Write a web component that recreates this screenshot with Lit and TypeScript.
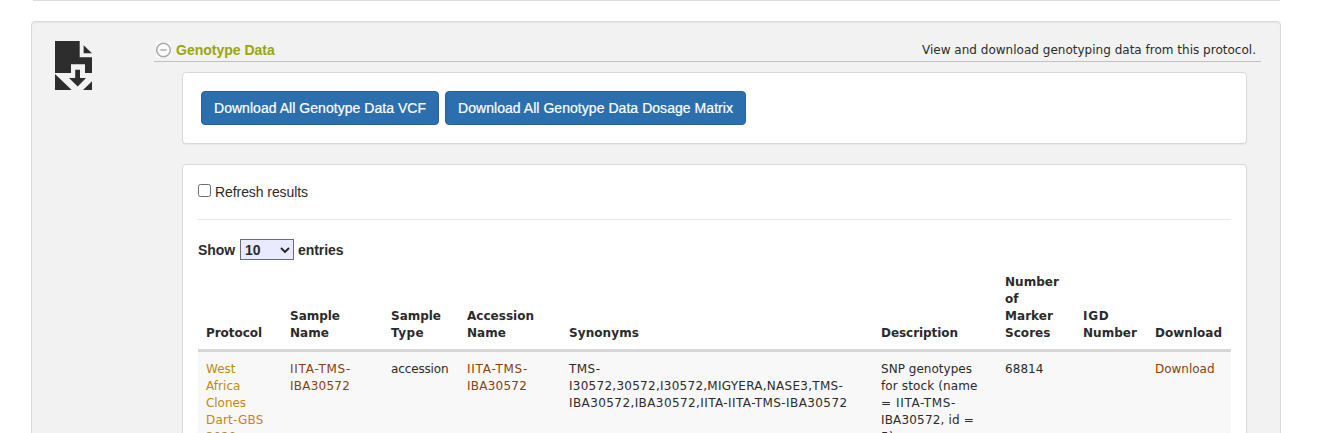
import { LitElement, html, css, svg } from "lit";
import { customElement } from "lit/decorators.js";

type Line = { text: string; width?: number };
type Column = { title: Line[]; cell: Line[]; width: number; tone?: string };

const columns: Column[] = [
  {
    width: 84,
    title: [{ text: "Protocol", width: 56 }],
    cell: [
      { text: "West", width: 29.5 },
      { text: "Africa", width: 34.5 },
      { text: "Clones", width: 40 },
      { text: "Dart-GBS", width: 57.5 },
      { text: "2020", width: 30.5 },
    ],
    tone: "gold",
  },
  {
    width: 101,
    title: [{ text: "Sample", width: 50 }, { text: "Name", width: 39 }],
    cell: [{ text: "IITA-TMS-", width: 61 }, { text: "IBA30572", width: 60 }],
    tone: "brown",
  },
  {
    width: 76,
    title: [{ text: "Sample", width: 50 }, { text: "Type", width: 33 }],
    cell: [{ text: "accession", width: 57.5 }],
  },
  {
    width: 102,
    title: [{ text: "Accession", width: 67 }, { text: "Name", width: 39 }],
    cell: [{ text: "IITA-TMS-", width: 61 }, { text: "IBA30572", width: 60 }],
    tone: "brown",
  },
  {
    width: 312,
    title: [{ text: "Synonyms", width: 70 }],
    cell: [
      { text: "TMS-", width: 31.5 },
      { text: "I30572,30572,I30572,MIGYERA,NASE3,TMS-", width: 274 },
      { text: "IBA30572,IBA30572,IITA-IITA-TMS-IBA30572", width: 278.5 },
    ],
  },
  {
    width: 124,
    title: [{ text: "Description", width: 77 }],
    cell: [
      { text: "SNP genotypes", width: 91 },
      { text: "for stock (name", width: 96.5 },
      { text: "= IITA-TMS-", width: 75 },
      { text: "IBA30572, id =", width: 93 },
      { text: "5)", width: 13 },
    ],
  },
  {
    width: 78,
    title: [
      { text: "Number", width: 54 },
      { text: "of", width: 13.5 },
      { text: "Marker", width: 48 },
      { text: "Scores", width: 45.5 },
    ],
    cell: [{ text: "68814", width: 38.5 }],
  },
  {
    width: 72,
    title: [{ text: "IGD", width: 26.5 }, { text: "Number", width: 54 }],
    cell: [],
  },
  {
    width: 84,
    title: [{ text: "Download", width: 67 }],
    cell: [{ text: "Download", width: 59.5 }],
    tone: "brown",
  },
];

/* A line of text tracked out or in so that it fills the width given for it. */
@customElement("fit-text")
class FitText extends LitElement {
  static properties = { text: {}, width: { type: Number } };
  declare text: string;
  declare width: number;
  static styles = css`
    :host { display: block; white-space: nowrap; }
    .run { display: inline-block; }
  `;
  render() {
    return html`<span class="run">${this.text}</span>`;
  }
  updated() {
    const run = this.renderRoot.querySelector(".run") as HTMLElement;
    run.style.letterSpacing = "0px";
    const natural = run.getBoundingClientRect().width;
    if (this.width && natural) {
      run.style.letterSpacing = `${(this.width - natural) / this.text.length}px`;
    }
  }
}

@customElement("app-root")
export class AppRoot extends LitElement {
  static styles = css`
    * { box-sizing: border-box; }
    :host {
      display: block;
      height: 433px;
      overflow: hidden;
      background: #fff;
      color: #2b2b2b;
      font: 12px/17px "DejaVu Sans", Verdana, sans-serif;
    }
    .previous {
      height: 1px;
      margin: 0 43px 20px 33px;
      background: #dcdcdc;
    }
    .panel {
      display: flex;
      align-items: flex-start;
      width: 1250px;
      height: 460px;
      margin-left: 31px;
      padding: 19px 19px 0 23px;
      background: #f2f2f2;
      border: 1px solid #dcdcdc;
      border-radius: 4px;
      box-shadow: inset 0 1px 1px rgba(0, 0, 0, 0.05);
    }
    .file { display: block; flex: none; width: 38px; height: 50px; margin-right: 61px; }
    .main { flex: 1; }
    .heading {
      display: flex;
      align-items: center;
      height: 21px;
      padding: 0 5px 2px 1px;
      border-bottom: 1px solid #c1c1c1;
    }
    .toggle { display: block; width: 17px; height: 17px; margin-right: 4px; }
    .title {
      flex: 1;
      color: #9aa50a;
      font: bold 14px/18px "Liberation Sans", Arial, sans-serif;
    }
    .card {
      width: 1065px;
      margin-left: 28px;
      background: #fff;
      border: 1px solid #d9d9d9;
      border-radius: 4px;
      box-shadow: 0 1px 1px rgba(0, 0, 0, 0.05);
    }
    .actions {
      display: flex;
      gap: 6px;
      height: 72px;
      margin-top: 10px;
      padding: 18px;
    }
    .button {
      height: 34px;
      padding: 0 12px;
      border: 1px solid #28609a;
      border-radius: 4px;
      background: #2c6fae;
      color: #fff;
      font: 14px/32px "Liberation Sans", Arial, sans-serif;
      -webkit-text-stroke: 0.2px #fff;
    }
    .results { height: 400px; margin-top: 20px; padding: 17px 15px 0; }
    .refresh {
      display: flex;
      align-items: center;
      height: 20px;
      font: 14px/20px "Liberation Sans", Arial, sans-serif;
    }
    .box {
      width: 13px;
      height: 13px;
      margin: 0 4px 3px 0;
      border: 1px solid #6b6b6b;
      border-radius: 2.5px;
      background: #fff;
    }
    .rule { height: 1px; margin: 17px 0 19px; background: #e9e9e9; }
    .length {
      display: flex;
      align-items: center;
      height: 21px;
      font: bold 14px/21px "Liberation Sans", Arial, sans-serif;
    }
    .label { padding-top: 2px; }
    .select {
      display: flex;
      align-items: center;
      justify-content: space-between;
      width: 54px;
      height: 21px;
      margin: 0 4px 0 5px;
      padding: 1px 3px 0 4px;
      border: 1px solid #6c6c72;
      background: #e9e9ff;
    }
    .chevron { width: 10px; height: 8px; margin-bottom: 1px; }
    .table {
      width: 1033px;
      margin-top: 5px;
      table-layout: fixed;
      border-collapse: separate;
      border-spacing: 0;
    }
    th {
      padding: 9px 8px 7px;
      border-bottom: 3px solid #d6d6d6;
      vertical-align: bottom;
      text-align: left;
    }
    td { padding: 9px 8px 8px; height: 110px; background: #f8f8f8; vertical-align: top; }
    .gold { color: #c5870c; }
    .brown { color: #8a400c; }
  `;

  private lines(lines: Line[]) {
    return lines.map((l) => html`<fit-text .text=${l.text} .width=${l.width}></fit-text>`);
  }

  render() {
    return html`
      <div class="previous"></div>
      <section class="panel">
        <svg class="file" viewBox="0 0 38 50" fill="#2d2d2d">
          ${svg`
            <path d="M0 0H24.7V16.3H37V32H30V23.3H16V32H0Z"/>
            <path d="M28.6 4.3V12.3H37Z"/>
            <path d="M20.2 28.8H25V37H31L22.7 45.5L14 37H20.2Z"/>
            <path d="M0 33V49H16.7Z"/>
            <path d="M37 40.2V49H28Z"/>`}
        </svg>
        <div class="main">
          <div class="heading">
            <svg class="toggle" viewBox="0 0 17 17" fill="none" stroke="#aaa">
              <rect x="1" width="15" height="15.5" fill="#fafafa" stroke="none"/>
              <circle cx="8.5" cy="8" r="6.8" stroke-width="1.5"/>
              <path d="M5.3 8h6.4" stroke-width="1.4"/>
            </svg>
            <span class="title"><fit-text .text=${"Genotype Data"} .width=${98.8}></fit-text></span>
            <fit-text .text=${"View and download genotyping data from this protocol."} .width=${334}></fit-text>
          </div>
          <div class="card actions">
            <div class="button"><fit-text .text=${"Download All Genotype Data VCF"} .width=${212}></fit-text></div>
            <div class="button"><fit-text .text=${"Download All Genotype Data Dosage Matrix"} .width=${275}></fit-text></div>
          </div>
          <div class="card results">
            <div class="refresh">
              <span class="box"></span>
              <fit-text .text=${"Refresh results"} .width=${93}></fit-text>
            </div>
            <div class="rule"></div>
            <div class="length">
              <fit-text class="label" .text=${"Show"} .width=${37}></fit-text>
              <span class="select">
                <span>10</span>
                <svg class="chevron" viewBox="0 0 10 8" fill="none" stroke="#222" stroke-width="1.8">
                  <path d="M1 2l4 4 4-4"/>
                </svg>
              </span>
              <fit-text class="label" .text=${"entries"} .width=${45.5}></fit-text>
            </div>
            <table class="table">
              <colgroup>${columns.map((c) => html`<col style="width:${c.width}px">`)}</colgroup>
              <thead>
                <tr>${columns.map((c) => html`<th>${this.lines(c.title)}</th>`)}</tr>
              </thead>
              <tbody>
                <tr>${columns.map((c) => html`<td class=${c.tone ?? ""}>${this.lines(c.cell)}</td>`)}</tr>
              </tbody>
            </table>
          </div>
        </div>
      </section>
    `;
  }
}
